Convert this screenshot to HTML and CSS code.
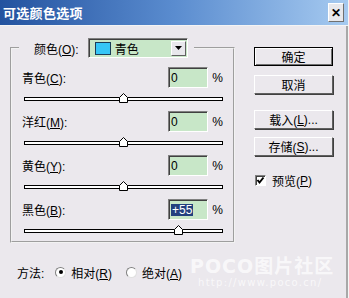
FILE: index.html
```html
<!DOCTYPE html>
<html lang="zh">
<head>
<meta charset="utf-8">
<link rel="stylesheet" href="styles.css">
</head>
<body>
<div class="win">
  <div class="titlebar">
    <span class="title">可选颜色选项</span>
    <span class="close">✕</span>
  </div>
  <div class="main">
    <fieldset class="group">
      <legend class="legend">
        <span class="lbl">颜色(<u>O</u>):</span>
        <span class="select">
          <span class="swatch"></span>
          <span class="seltext">青色</span>
          <span class="arrow"><svg width="7" height="4" viewBox="0 0 7 4"><polygon points="0,0 7,0 3.5,4" fill="#000"/></svg></span>
        </span>
      </legend>
      <div class="row">
        <div class="rowhead"><span class="lbl">青色(<u>C</u>):</span><span class="field">0</span><span class="pct">%</span></div>
        <div class="slider"><div class="track"></div><svg class="thumb" style="left:50%" width="9" height="10" viewBox="0 0 9 10"><polygon points="0.5,4.5 4.5,0.5 8.5,4.5 8.5,9.5 0.5,9.5" fill="#fff" stroke="#000"/></svg></div>
      </div>
      <div class="row">
        <div class="rowhead"><span class="lbl">洋红(<u>M</u>):</span><span class="field">0</span><span class="pct">%</span></div>
        <div class="slider"><div class="track"></div><svg class="thumb" style="left:50%" width="9" height="10" viewBox="0 0 9 10"><polygon points="0.5,4.5 4.5,0.5 8.5,4.5 8.5,9.5 0.5,9.5" fill="#fff" stroke="#000"/></svg></div>
      </div>
      <div class="row">
        <div class="rowhead"><span class="lbl">黄色(<u>Y</u>):</span><span class="field">0</span><span class="pct">%</span></div>
        <div class="slider"><div class="track"></div><svg class="thumb" style="left:50%" width="9" height="10" viewBox="0 0 9 10"><polygon points="0.5,4.5 4.5,0.5 8.5,4.5 8.5,9.5 0.5,9.5" fill="#fff" stroke="#000"/></svg></div>
      </div>
      <div class="row">
        <div class="rowhead"><span class="lbl">黑色(<u>B</u>):</span><span class="field"><span class="sel">+55</span></span><span class="pct">%</span></div>
        <div class="slider"><div class="track"></div><svg class="thumb" style="left:77.5%" width="9" height="10" viewBox="0 0 9 10"><polygon points="0.5,4.5 4.5,0.5 8.5,4.5 8.5,9.5 0.5,9.5" fill="#fff" stroke="#000"/></svg></div>
      </div>
    </fieldset>
    <div class="buttons">
      <div class="btn default">确定</div>
      <div class="btn b2">取消</div>
      <div class="btn b3">载入(<u>L</u>)...</div>
      <div class="btn b4">存储(<u>S</u>)...</div>
      <label class="check"><span class="box"><svg width="9" height="9" viewBox="0 0 9 9"><polyline points="1.5,4 3.5,6.5 7.5,1.5" fill="none" stroke="#000" stroke-width="2"/></svg></span>预览(<u>P</u>)</label>
    </div>
  </div>
  <div class="method">
    <span class="mlabel">方法:</span>
    <span class="radio on"><span class="dot"></span></span><span class="rtext">相对(<u>R</u>)</span>
    <span class="radio"></span><span class="rtext">绝对(<u>A</u>)</span>
  </div>
  <div class="watermark">
    <div class="wm1">POCO图片社区</div>
    <div class="wm2">http://www.poco.cn/</div>
  </div>
</div>
</body>
</html>
```
FILE: styles.css
```css
html, body {
  margin: 0;
  padding: 0;
  background: #ebe8ed;
}
.win {
  position: relative;
  width: 349px;
  height: 298px;
  box-sizing: border-box;
  background: #ebe8ed;
  border-right: 1px solid #f6f6f6;
  box-shadow: inset -2px 0 0 #a8a8a8;
  font-family: "Liberation Sans", "Noto Sans CJK SC", sans-serif;
  font-size: 12px;
  color: #000;
  overflow: hidden;
}
.titlebar {
  height: 26px;
  display: flex;
  align-items: center;
  justify-content: space-between;
  padding: 0 4px 0 3px;
  background: linear-gradient(90deg, #23529f 0%, #5a8ccf 50%, #a6caf0 100%);
  border-bottom: 1px solid #f4f4f4;
  box-sizing: border-box;
}
.title {
  color: #fff;
  font-weight: bold;
  font-size: 13px;
  font-family: "Noto Sans CJK SC", sans-serif;
  letter-spacing: 0.3px;
}
.close {
  width: 16px;
  height: 19px;
  box-sizing: border-box;
  background: #e8e8ec;
  border: 1px solid;
  border-color: #fff #707070 #707070 #fff;
  display: flex;
  align-items: center;
  justify-content: center;
  font-size: 12px;
  font-weight: bold;
  line-height: 1;
}
.main {
  display: flex;
  align-items: flex-start;
  padding-top: 12px;
}
.group {
  margin: 0 0 0 10px;
  width: 225px;
  box-sizing: border-box;
  border: 2px groove #f2f2f2;
  padding: 0 10px 7px 10px;
  min-width: 0;
}
.legend {
  display: flex;
  align-items: center;
  padding: 0 6px 0 15px;
  margin-left: -3px;
  height: 20px;
}
.lbl {
  white-space: nowrap;
}
.legend .lbl {
  margin-right: 9px;
}
.select {
  width: 100px;
  height: 20px;
  box-sizing: border-box;
  background: #c8e7c8;
  border: 1px solid;
  border-color: #808080 #fff #fff #808080;
  box-shadow: inset 1px 1px 0 #404040;
  display: flex;
  align-items: center;
  padding-left: 6px;
}
.swatch {
  width: 16px;
  height: 13px;
  box-sizing: border-box;
  background: #36c6f6;
  border: 1px solid #1c3c58;
  margin-right: 4px;
}
.seltext {
  flex: 1;
}
.arrow {
  width: 15px;
  height: 15px;
  box-sizing: border-box;
  margin-right: 1px;
  background: #e8e8ec;
  border: 1px solid;
  border-color: #fff #606060 #606060 #fff;
  display: flex;
  align-items: center;
  justify-content: center;
}
.row {
  margin-bottom: 9px;
}
.group .legend + .row {
  margin-top: 9px;
}
.row:last-child {
  margin-bottom: 0;
}
.rowhead {
  display: flex;
  align-items: center;
  height: 21px;
}
.rowhead .lbl {
  flex: 1;
}
.field {
  width: 40px;
  height: 21px;
  box-sizing: border-box;
  background: #c8e7c8;
  border: 1px solid;
  border-color: #808080 #fff #fff #808080;
  box-shadow: inset 1px 1px 0 #404040;
  padding-left: 2px;
  display: flex;
  align-items: center;
}
.sel {
  background: #23407e;
  color: #fff;
  padding: 0 1px;
  line-height: 12px;
}
.pct {
  width: 11px;
  margin-left: 4px;
  text-align: right;
}
.slider {
  position: relative;
  height: 14px;
  margin-left: 2px;
}
.track {
  position: relative;
  top: 9px;
  height: 4px;
  box-sizing: border-box;
  border: 1px solid #000;
  background: #fff;
}
.thumb {
  position: absolute;
  top: 5px;
  margin-left: -4.5px;
  display: block;
}
.buttons {
  margin-left: 19px;
  padding-top: 9px;
  width: 79px;
  display: flex;
  flex-direction: column;
}
.btn {
  height: 19px;
  box-sizing: border-box;
  border: 1px solid;
  border-color: #fff #606060 #606060 #fff;
  box-shadow: 1px 1px 0 #404040;
  display: flex;
  align-items: center;
  justify-content: center;
  background: #ebe8ed;
}
.btn.default {
  border: 1px solid #000;
  box-shadow: inset 1px 1px 0 #fff, inset -1px -1px 0 #707070;
}
.b2 { margin-top: 9px; }
.b3 { margin-top: 16px; }
.b4 { margin-top: 8px; }
.check {
  margin-top: 16px;
  display: flex;
  align-items: center;
  padding-left: 1px;
}
.box {
  width: 11px;
  height: 11px;
  box-sizing: border-box;
  background: #fff;
  border: 1px solid;
  border-color: #808080 #fff #fff #808080;
  box-shadow: inset 1px 1px 0 #404040;
  display: flex;
  align-items: center;
  justify-content: center;
  margin-right: 6px;
}
.method {
  display: flex;
  align-items: center;
  margin-top: 21px;
  padding-left: 17px;
  height: 16px;
}
.mlabel {
  margin-right: 11px;
}
.radio {
  width: 11px;
  height: 11px;
  box-sizing: border-box;
  border-radius: 50%;
  background: #fff;
  border: 1px solid;
  border-color: #808080 #e0e0e0 #e0e0e0 #808080;
  display: flex;
  align-items: center;
  justify-content: center;
  margin-right: 5px;
}
.dot {
  width: 4px;
  height: 4px;
  border-radius: 50%;
  background: #000;
}
.rtext {
  margin-right: 14px;
}
.watermark {
  position: absolute;
  left: 190px;
  top: 255px;
  width: 150px;
  color: rgba(255, 255, 255, 0.7);
  font-family: "DejaVu Sans", "Noto Sans CJK SC", sans-serif;
  white-space: nowrap;
}
.wm1 {
  font-size: 19px;
  font-weight: bold;
  letter-spacing: 1px;
  line-height: 22px;
}
.wm2 {
  font-size: 10px;
  line-height: 12px;
  letter-spacing: 1.3px;
  padding-left: 8px;
}
```
